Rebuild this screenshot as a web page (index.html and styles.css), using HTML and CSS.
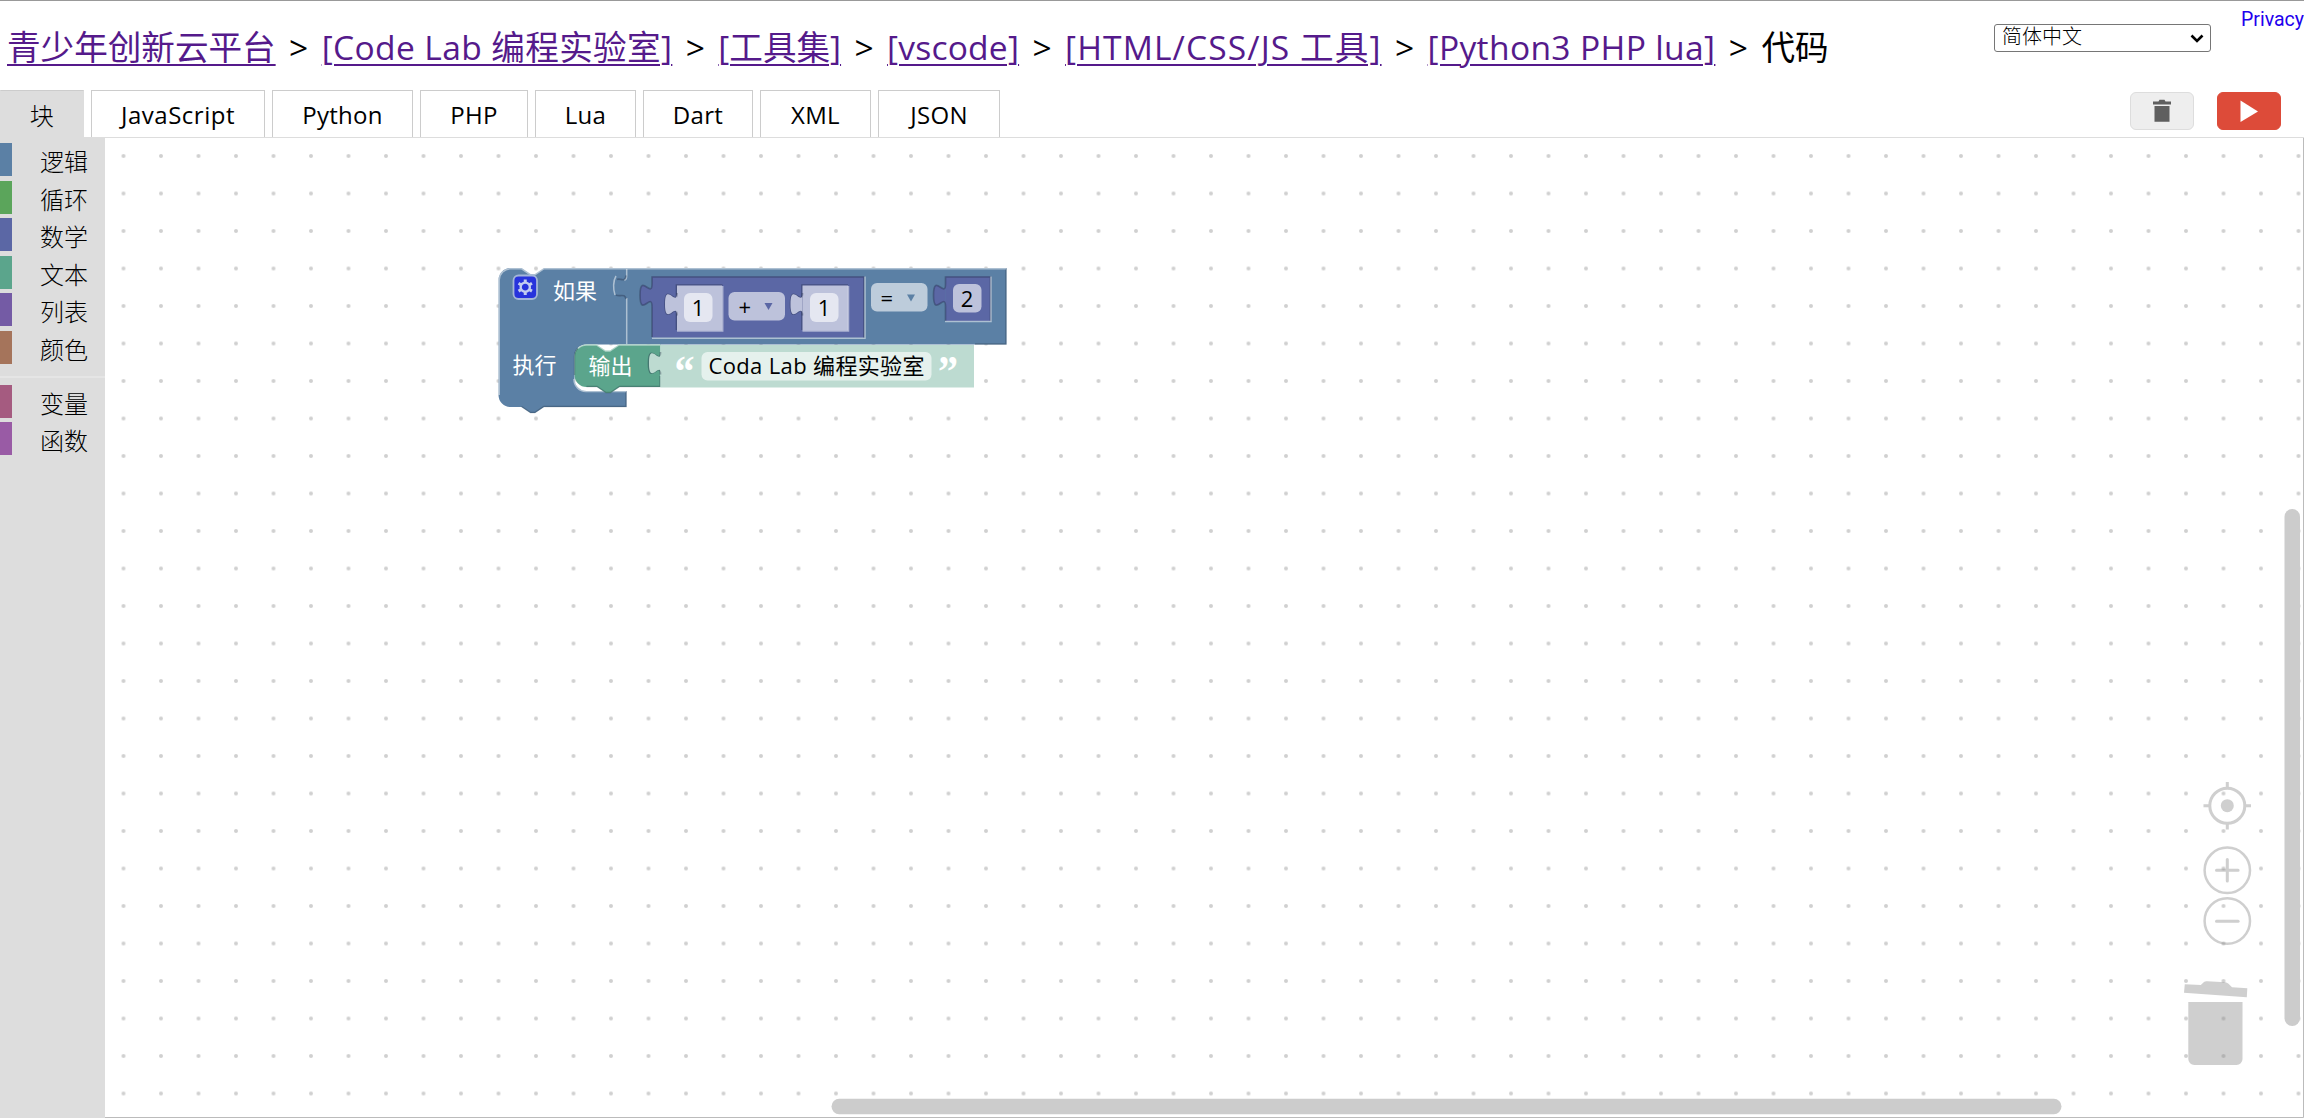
FILE: index.html
```html
<!DOCTYPE html>
<html lang="zh-Hans">
<head>
<meta charset="utf-8">
<title>代码</title>
<link rel="stylesheet" href="styles.css">
</head>
<body>
<div class="page">
  <header class="header">
    <h1 class="crumbs">
      <a class="c1" href="#">青少年创新云平台</a><i>&gt;</i><a class="c2" href="#">[Code Lab 编程实验室]</a><i>&gt;</i><a class="c3" href="#">[工具集]</a><i>&gt;</i><a class="c4" href="#">[vscode]</a><i>&gt;</i><a class="c5" href="#">[HTML/CSS/JS 工具]</a><i>&gt;</i><a class="c6" href="#">[Python3 PHP lua]</a><i>&gt;</i><span>代码</span>
    </h1>
    <div class="language">
      <select class="language-menu"><option>简体中文</option></select>
      <svg class="chevron" viewBox="0 0 14 9"><path d="M1.5 1.5 7 7l5.5-5.5"/></svg>
    </div>
    <a class="privacy" href="#">Privacy</a>
  </header>
  <nav class="tabbar">
    <div class="tab tab-on w84">块</div>
    <div class="tab w174">JavaScript</div>
    <div class="tab w141">Python</div>
    <div class="tab w108">PHP</div>
    <div class="tab w101">Lua</div>
    <div class="tab w110">Dart</div>
    <div class="tab w111">XML</div>
    <div class="tab w122">JSON</div>
    <div class="actions">
      <button class="btn"><svg width="20" height="24" viewBox="0 0 20 24"><path fill="#5f5f5f" d="M1 2.5h5.500l1-1.700h5l1 1.700H19v3H1zM2.500 7h15v15.800h-15z"/></svg></button>
      <button class="btn btn-run"><svg width="20" height="24" viewBox="0 0 20 24"><path fill="#fff" d="M1.500 1.500 19 12.500 1.500 23z"/></svg></button>
    </div>
  </nav>
  <main class="main">
    <aside class="toolbox">
      <div class="cat logic">逻辑</div>
      <div class="cat loops">循环</div>
      <div class="cat math">数学</div>
      <div class="cat text">文本</div>
      <div class="cat lists">列表</div>
      <div class="cat colour">颜色</div>
      <hr class="sep">
      <div class="cat vars">变量</div>
      <div class="cat funcs">函数</div>
    </aside>
    <section class="workspace">
      <svg class="canvas" viewBox="105 138 2199 980">
        <defs>
          <pattern id="grid" x="104.75" y="137.25" width="37.5" height="37.5" patternUnits="userSpaceOnUse">
            <circle cx="18.750" cy="18.750" r="2" fill="#d0d0d0"/>
          </pattern>
          <path id="tab" d="M0 0c0 15-12-12-12 11.250s12-3.750 12 11.250z"/>
          <path id="tabline" d="M0 0c0 15-12-12-12 11.250s12-3.750 12 11.250"/>
        </defs>
        <rect x="105" y="138" width="2199" height="980" fill="#fff"/>
        <rect x="105" y="138" width="2199" height="980" fill="url(#grid)"/>

        <!-- if block -->
        <path fill="#5b80a5" d="M498.500 280a12 12 0 0 1 12-12h11l9 6h4.500l9-6H1006.500V344.500H586.500a12 12 0 0 0-12 12V379a12 12 0 0 0 12 12H626.500V407H544l-9 6h-4.500l-9-6H510.500a12 12 0 0 1-12-12z"/>
        <path class="edge" d="M1005.900 268.500V344H975M626 391.500V406.500H543.800l-9 6h-4.300l-9-6"/>
        <path class="light" d="M499.200 395V280a11.500 11.500 0 0 1 11.500-11.300H521.300l9 6h4.700l9-6H1006M574 379a12 12 0 0 0 12.500 12.500H626"/>
        <path class="light" d="M626.700 269v6.500c0 3-1 4.500-2.500 4.500M616 276c-3 5-3 13-1 19M626.700 298V344"/>
        <path class="dark" d="M626 275.500c-1 8-6 2-9 4M616 295c4 2 9-2 10 4"/>
        <rect x="513.500" y="275.500" width="23.500" height="23.500" rx="5" fill="#2733dc" stroke="#a3b5d8" stroke-width="1.800"/>
        <g transform="translate(525.250 287.200)" fill="none" stroke="#c3cdf0">
          <circle r="4.600" stroke-width="2.400"/>
          <path stroke-width="3" d="M0-5v-2.800M0 5v2.800M4.400-2.500l2.300-1.400M-4.400 2.500l-2.300 1.400M4.400 2.500l2.300 1.400M-4.400-2.500l-2.300-1.400"/>
        </g>
        <text class="label" x="553" y="299" textLength="44">如果</text>
        <text class="label" x="512.500" y="373" textLength="44">执行</text>

        <!-- arithmetic block -->
        <path fill="#5b67a5" d="M652 276.500h212v61h-212z"/>
        <use href="#tab" x="652" y="284" fill="#5b67a5"/>
        <use href="#tabline" x="652" y="284" class="dark"/>
        <path class="dark" d="M652 284v-7h212V338"/>
        <path class="dark" d="M652 306.500V337"/>
        <path class="light" d="M652 338.200H865V276.500"/>

        <path class="dark" d="M676.500 330V285h46"/>
        <path fill="#bdc2db" d="M677 285.500h45v45h-45z"/>
        <use href="#tabline" x="677" y="293" class="dark"/>
        <use href="#tab" x="677" y="293" fill="#bdc2db"/>
        <path class="light" d="M677 331h45.700V286"/>
        <rect x="684" y="293" width="28.500" height="29" rx="6" fill="#e5e7f1"/>
        <text class="value" x="698" y="316" text-anchor="middle">1</text>

        <rect x="728.500" y="292" width="56.500" height="28.500" rx="6" fill="#bdc2db"/>
        <text class="value" x="738.500" y="315">+</text>
        <path fill="#5b67a5" d="M764.500 303h8l-4 7z"/>

        <path class="dark" d="M802 330V285h46"/>
        <path fill="#bdc2db" d="M802.500 285.500h45.500v45h-45.500z"/>
        <use href="#tabline" x="802.500" y="293" class="dark"/>
        <use href="#tab" x="802.500" y="293" fill="#bdc2db"/>
        <path class="light" d="M802.500 331h46V286"/>
        <rect x="810" y="293" width="28.500" height="29" rx="6" fill="#e5e7f1"/>
        <text class="value" x="824" y="316" text-anchor="middle">1</text>

        <!-- comparison -->
        <rect x="871" y="283" width="56.500" height="28.500" rx="6" fill="#bdccdb"/>
        <text class="value" x="880.500" y="306">=</text>
        <path fill="#5b80a5" d="M907 294.500h8l-4 7z"/>

        <path fill="#5b67a5" d="M945.500 276.500h45v44.500h-45z"/>
        <use href="#tab" x="945.500" y="284" fill="#5b67a5"/>
        <use href="#tabline" x="945.500" y="284" class="dark"/>
        <path class="dark" d="M945.500 284v-7h45V321M945.500 306.500V321"/>
        <path class="light" d="M945 321.500h46V276.500"/>
        <rect x="953" y="284" width="28.500" height="28.500" rx="6" fill="#bdc2db"/>
        <text class="value" x="967" y="307" text-anchor="middle">2</text>

        <!-- print block -->
        <path fill="#5ba58c" d="M574.500 356.500a12 12 0 0 1 12-12h10l9 6h4.500l9-6H660.500V387H619.500l-9 6H606l-9-6H586.500a12 12 0 0 1-12-12z"/>
        <path class="edge" d="M574.500 375V356.500a12 12 0 0 1 3.500-8.500M586.500 386.500H597l9 6h4.500l9-6H660V376"/>
        <path class="light" d="M578 348.500a12 12 0 0 1 8.500-3.500h10l9 6h4.500l9-6H660"/>
        <text class="label" x="588.500" y="374" textLength="44">输出</text>

        <path fill="#bddbd1" d="M660.500 345H974v42.500H660.500z"/>
        <use href="#tabline" x="660.500" y="352" class="dark"/>
        <use href="#tab" x="661" y="352" fill="#bddbd1"/>
        <rect x="701.500" y="352" width="230" height="28.500" rx="6" fill="#e5f1ed"/>
        <text class="quote" x="674.500" y="386" textLength="20" lengthAdjust="spacingAndGlyphs">“</text>
        <text class="value" x="708.500" y="374" textLength="216">Coda Lab 编程实验室</text>
        <text class="quote" x="938" y="386" textLength="20" lengthAdjust="spacingAndGlyphs">”</text>

        <!-- zoom controls and trash -->
        <g opacity=".4" fill="none" stroke="#888" stroke-width="3">
          <g><circle cx="2227.300" cy="805.700" r="17.500"/><circle cx="2227.300" cy="805.700" r="6.500" fill="#888" stroke="none"/><path d="M2227.300 782v6M2227.300 823.500v6M2203.500 805.700h6M2245 805.700h6"/></g>
          <g><circle cx="2227.300" cy="870.300" r="22.700" stroke-width="2.500"/><path d="M2216.500 870.300h21.600M2227.300 859.500v21.600" stroke-linecap="round"/></g>
          <g><circle cx="2227.300" cy="921" r="22.700" stroke-width="2.500"/><path d="M2216.500 921.200h21.600" stroke-linecap="round"/></g>
          <path fill="#888" stroke="none" d="M2188.300 1002h54.200v57a6 6 0 0 1-6 6h-42.200a6 6 0 0 1-6-6zM2184.800 984.200l16 .9 3.200-3q1-1 3-.9l18 1q2 .2 3.500 1.500l3.500 3.500 15.300 1-.5 9-62.800-4.500z"/>
        </g>
        <rect x="2284.500" y="509" width="15.500" height="517" rx="7.700" fill="#ccc"/>
        <rect x="831.500" y="1098.800" width="1230" height="15.500" rx="7.700" fill="#ccc"/>
        <path d="M2303.500 138V1117.500H105" fill="none" stroke="#bbb"/>
      </svg>
    </section>
  </main>
</div>
</body>
</html>
```
FILE: styles.css
```css
* { box-sizing: border-box; }
body { margin: 0; background: #fff; font-family: "Open Sans", "Noto Sans CJK SC", sans-serif; color: #000; }
.page { width: 2304px; height: 1118px; display: flex; flex-direction: column; overflow: hidden; border-top: 1px solid #999; }
.header { height: 89px; display: flex; align-items: flex-start; }
.crumbs { margin: 0; padding: 18px 0 0 7px; width: 1994px; height: 89px; font-size: 33.6px; font-weight: 400; line-height: 56px; white-space: nowrap; display: flex; }
.crumbs a { color: #551a8b; text-decoration: underline; text-decoration-thickness: 2px; text-underline-offset: 4px; }
.crumbs i { font-style: normal; width: 46px; text-align: center; flex: none; }
.crumbs .c2 { letter-spacing: .37px; }
.crumbs .c4 { letter-spacing: .2px; }
.crumbs .c5 { letter-spacing: 1.1px; }
.crumbs .c6 { letter-spacing: .35px; }
.language { position: relative; width: 217px; height: 27px; margin-top: 22.5px; }
.language-menu { appearance: none; display: block; width: 217px; height: 28px; border: 1px solid #767676; border-radius: 3px; background: #fff; padding: 0 0 3px 7px; font: 300 20px/22px "Noto Sans CJK SC", sans-serif; color: #000; }
.chevron { position: absolute; right: 7px; top: 10px; width: 14px; height: 9px; fill: none; stroke: #000; stroke-width: 2.6; }
.privacy { margin: 7px 0 0 30px; font: 19.5px/23px Roboto, sans-serif; color: #20e; text-decoration: none; }
.tabbar { height: 48px; display: flex; gap: 7px; border-bottom: 1px solid #ddd; }
.tab { height: 47px; border: 1px solid #ccc; border-bottom: 0; display: flex; align-items: center; justify-content: center; font-size: 24px; line-height: 32px; padding-top: 2px; letter-spacing: .3px; }
.tab-on { background: #ddd; height: 48px; border-color: #ccc #ddd; font-weight: 300; }
.w84 { width: 84px; }
.w174 { width: 174px; letter-spacing: .5px; }
.w141 { width: 141px; }
.w108 { width: 108px; }
.w101 { width: 101px; }
.w110 { width: 110px; }
.w111 { width: 111px; }
.w122 { width: 122px; }
.actions { margin-left: auto; padding: 2px 23px 0 0; display: flex; gap: 23px; }
.btn { width: 64px; height: 38px; padding: 0; display: flex; align-items: center; justify-content: center; border: 1px solid #ddd; border-radius: 6px; background: #eee; }
.btn-run { background: #dd4b39; border-color: #dd4b39; }
.main { flex: 1; display: flex; min-height: 0; }
.toolbox { width: 105px; background: #ddd; padding-top: 5.3px; flex: none; display: flex; flex-direction: column; }
.cat { height: 33px; margin-bottom: 4.5px; padding-left: 28px; border-left: 12px solid; font: 300 24px/36px "Noto Sans CJK SC", sans-serif; flex: none; }
.cat { -webkit-text-fill-color: #000; }
.logic { border-color: #5b80a5; }
.loops { border-color: #5ba55b; }
.math { border-color: #5b67a5; }
.text { border-color: #5ba58c; }
.lists { border-color: #745ba5; }
.colour { border-color: #a5745b; }
.vars { border-color: #a55b80; }
.funcs { border-color: #995ba5; }
.sep { width: 100%; height: 1.5px; margin: 8px 0 7px; border: 0; background: #e5e5e5; flex: none; }
.workspace { flex: none; width: 2199px; }
.canvas { display: block; width: 2199px; height: 980px; }
.canvas text { font-family: "Open Sans", "Noto Sans CJK SC", sans-serif; font-size: 22px; }
.canvas .label { fill: #fff; }
.canvas .value { fill: #000; }
.canvas .quote { fill: #fff; font: 700 44px "Liberation Serif", serif; }
.light { fill: none; stroke: #fff; stroke-opacity: .5; stroke-width: 1.5; }
.dark { fill: none; stroke: #1d2440; stroke-opacity: .35; stroke-width: 1.7; }
.edge { fill: none; stroke: #1d3040; stroke-opacity: .3; stroke-width: 1.4; }
```
